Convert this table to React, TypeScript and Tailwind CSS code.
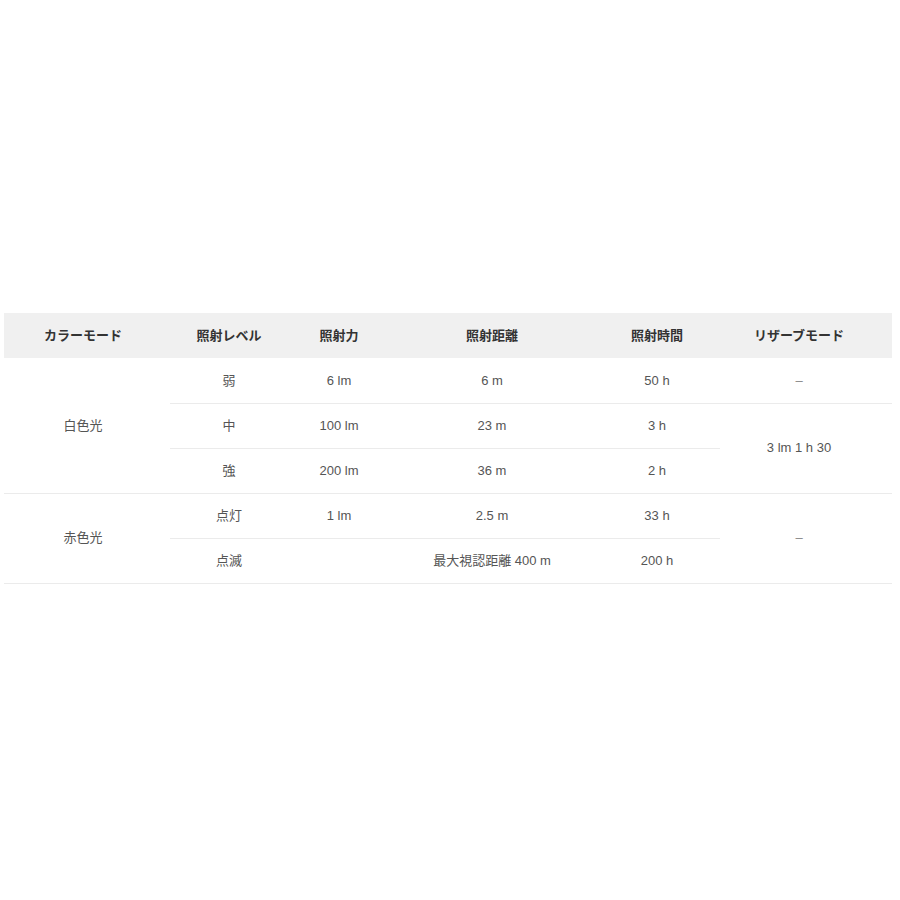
const rowCell = 'h-[45px] border-b border-[#ebebeb] text-center align-middle font-normal'

export default function App() {
  return (
    <div
      className="w-[900px] h-[900px] bg-white pt-[313px] pl-[4px]"
      style={{ fontFamily: '"Liberation Sans", "Noto Sans CJK JP", sans-serif' }}
    >
      <table className="w-[888px] table-fixed border-collapse text-[13px] text-[#555]">
        <colgroup>
          <col className="w-[166px]" />
          <col className="w-[118px]" />
          <col className="w-[102px]" />
          <col className="w-[204px]" />
          <col className="w-[126px]" />
          <col className="w-[172px]" />
        </colgroup>
        <thead>
          <tr className="bg-[#f0f0f0] text-[#333]">
            <th className="h-[45px] pr-[8px] font-bold">カラーモード</th>
            <th className="h-[45px] font-bold">照射レベル</th>
            <th className="h-[45px] font-bold">照射力</th>
            <th className="h-[45px] font-bold">照射距離</th>
            <th className="h-[45px] font-bold">照射時間</th>
            <th className="h-[45px] pr-[14px] font-bold">リザーブモード</th>
          </tr>
        </thead>
        <tbody>
          <tr>
            <td rowSpan={3} className={`${rowCell} pr-[8px]`}>白色光</td>
            <td className={rowCell}>弱</td>
            <td className={rowCell}>6 lm</td>
            <td className={rowCell}>6 m</td>
            <td className={rowCell}>50 h</td>
            <td className={`${rowCell} pr-[14px] text-[#888]`}>–</td>
          </tr>
          <tr>
            <td className={rowCell}>中</td>
            <td className={rowCell}>100 lm</td>
            <td className={rowCell}>23 m</td>
            <td className={rowCell}>3 h</td>
            <td rowSpan={2} className={`${rowCell} pr-[14px]`}>3 lm 1 h 30</td>
          </tr>
          <tr>
            <td className={rowCell}>強</td>
            <td className={rowCell}>200 lm</td>
            <td className={rowCell}>36 m</td>
            <td className={rowCell}>2 h</td>
          </tr>
          <tr>
            <td rowSpan={2} className={`${rowCell} pr-[8px]`}>赤色光</td>
            <td className={rowCell}>点灯</td>
            <td className={rowCell}>1 lm</td>
            <td className={rowCell}>2.5 m</td>
            <td className={rowCell}>33 h</td>
            <td rowSpan={2} className={`${rowCell} pr-[14px] text-[#888]`}>–</td>
          </tr>
          <tr>
            <td className={rowCell}>点滅</td>
            <td className={rowCell}></td>
            <td className={rowCell}>最大視認距離 400 m</td>
            <td className={rowCell}>200 h</td>
          </tr>
        </tbody>
      </table>
    </div>
  )
}
